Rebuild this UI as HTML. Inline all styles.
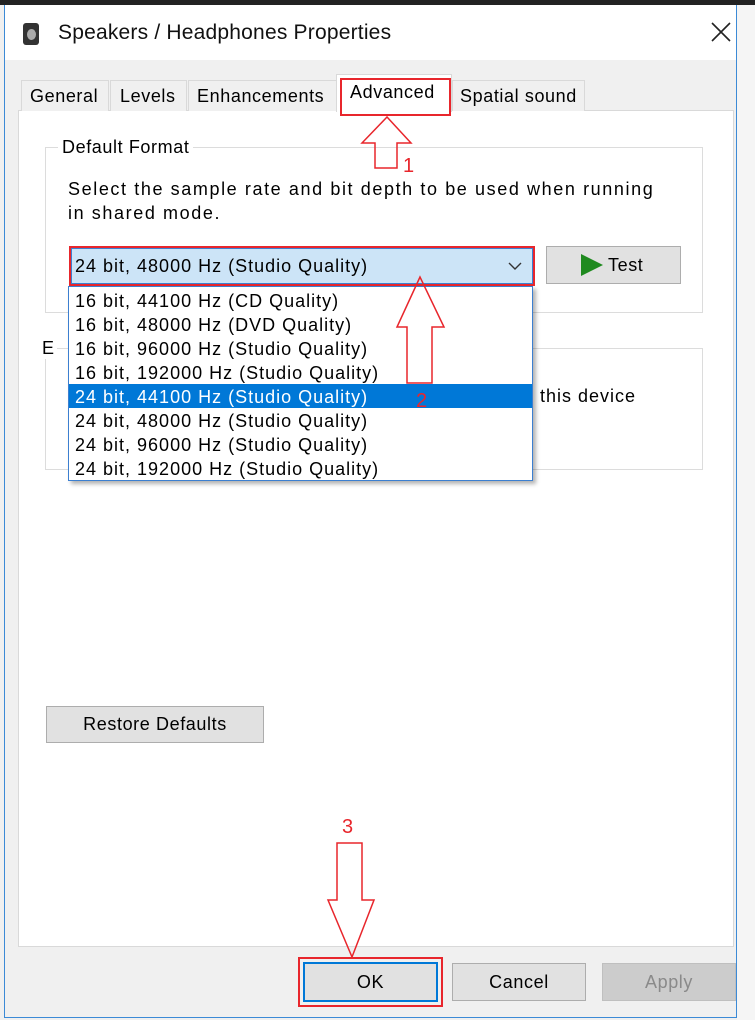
<!DOCTYPE html>
<html><head><meta charset="utf-8"><style>
*{margin:0;padding:0;box-sizing:border-box}
body{width:755px;height:1020px;background:#f0f0f0;position:relative;overflow:hidden;font-family:"Liberation Sans",sans-serif;font-size:18px;letter-spacing:0.6px;color:#000}
.a{position:absolute}
.t{position:absolute;white-space:nowrap}
.btn{position:absolute;background:#e1e1e1;border:1px solid #adadad;text-align:center}
</style></head><body>
<div class="a" style="left:0;top:0;width:755px;height:5px;background:#222"></div>
<div class="a" style="left:737px;top:5px;width:18px;height:1015px;background:#f5f5f5"></div>
<div class="a" style="left:4px;top:5px;width:733px;height:1013px;border:1px solid #3c8ad6;border-top:none;background:#f0f0f0"></div>
<div class="a" style="left:5px;top:5px;width:731px;height:55px;background:#fff"></div>
<div class="a" style="left:23px;top:23px;width:16px;height:22px;background:#333;border-radius:3px"></div>
<div class="a" style="left:27px;top:29px;width:9px;height:11px;background:#aaa;border-radius:50%"></div>
<div class="t" style="left:58px;top:21px;font-size:21px;letter-spacing:0.2px;color:#111">Speakers / Headphones Properties</div>
<svg class="a" style="left:711px;top:22px" width="20" height="20"><path d="M1 1L19 19M19 1L1 19" stroke="#222" stroke-width="1.6"/></svg>

<div class="a" style="left:18px;top:110px;width:716px;height:837px;background:#fff;border:1px solid #d9d9d9"></div>
<div class="a" style="left:21px;top:80px;width:88px;height:31px;border:1px solid #d9d9d9;border-bottom:none;background:#f0f0f0"></div>
<div class="t" style="left:30px;top:86px">General</div>
<div class="a" style="left:110px;top:80px;width:77px;height:31px;border:1px solid #d9d9d9;border-bottom:none;background:#f0f0f0"></div>
<div class="t" style="left:120px;top:86px">Levels</div>
<div class="a" style="left:188px;top:80px;width:150px;height:31px;border:1px solid #d9d9d9;border-bottom:none;background:#f0f0f0"></div>
<div class="t" style="left:197px;top:86px">Enhancements</div>
<div class="a" style="left:336px;top:74px;width:116px;height:38px;background:#fff;border:1px solid #d9d9d9;border-bottom:none"></div>
<div class="a" style="left:340px;top:78px;width:111px;height:38px;border:2px solid #e8262c"></div>
<div class="t" style="left:350px;top:82px">Advanced</div>
<div class="a" style="left:452px;top:80px;width:133px;height:31px;border:1px solid #d9d9d9;border-bottom:none;background:#f0f0f0"></div>
<div class="t" style="left:460px;top:86px">Spatial sound</div>

<div class="a" style="left:45px;top:147px;width:658px;height:166px;border:1px solid #dcdcdc"></div>
<div class="t" style="left:58px;top:137px;background:#fff;padding:0 4px">Default Format</div>
<div class="t" style="left:68px;top:177px;line-height:24px;letter-spacing:1.6px">Select the sample rate and bit depth to be used when running<br>in shared mode.</div>
<div class="a" style="left:69px;top:246px;width:466px;height:40px;background:#cce4f7;border:2px solid #e8262c;box-shadow:inset 0 0 0 1px #3c7fd0"></div>
<div class="t" style="left:75px;top:256px;letter-spacing:1px">24 bit, 48000 Hz (Studio Quality)</div>
<svg class="a" style="left:508px;top:262px" width="14" height="9"><path d="M1 1L7 7L13 1" fill="none" stroke="#333" stroke-width="1.4"/></svg>
<div class="btn" style="left:546px;top:246px;width:135px;height:38px"></div>
<div class="a" style="left:581px;top:254px;width:0;height:0;border-left:22px solid #1f8a1f;border-top:11px solid transparent;border-bottom:11px solid transparent"></div>
<div class="t" style="left:608px;top:255px">Test</div>

<div class="a" style="left:45px;top:348px;width:658px;height:122px;border:1px solid #dcdcdc"></div>
<div class="t" style="left:40px;top:338px;background:#fff;padding:0 2px">E</div>
<div class="t" style="left:540px;top:386px;letter-spacing:1px">this device</div>

<div class="a" style="left:68px;top:286px;width:465px;height:195px;background:#fff;border:1px solid #3c7fd0;box-shadow:3px 3px 4px rgba(0,0,0,.3)"></div>
<div class="a" style="left:69px;top:384px;width:463px;height:24px;background:#0078d7"></div>
<div class="t" style="left:75px;top:289px;line-height:24px;letter-spacing:1px">16 bit, 44100 Hz (CD Quality)<br>16 bit, 48000 Hz (DVD Quality)<br>16 bit, 96000 Hz (Studio Quality)<br>16 bit, 192000 Hz (Studio Quality)<br><span style="color:#fff">24 bit, 44100 Hz (Studio Quality)</span><br>24 bit, 48000 Hz (Studio Quality)<br>24 bit, 96000 Hz (Studio Quality)<br>24 bit, 192000 Hz (Studio Quality)</div>

<div class="btn" style="left:46px;top:706px;width:218px;height:37px;line-height:35px">Restore Defaults</div>

<div class="a" style="left:298px;top:957px;width:145px;height:50px;border:2px solid #e8262c"></div>
<div class="btn" style="left:303px;top:962px;width:135px;height:40px;border:2px solid #0078d7;line-height:36px">OK</div>
<div class="btn" style="left:452px;top:963px;width:134px;height:38px;line-height:36px">Cancel</div>
<div class="btn" style="left:602px;top:963px;width:134px;height:38px;line-height:36px;color:#8a8a8a;background:#ccc;border-color:#bfbfbf">Apply</div>

<svg class="a" style="left:0;top:0" width="755" height="1020">
<g fill="none" stroke="#e8262c" stroke-width="1.5">
<path d="M387 117 L362 143 L375 143 L375 168 L397 168 L397 143 L411 143 Z"/>
<path d="M420 277 L397 327 L407 327 L407 383 L432 383 L432 327 L444 327 Z"/>
<path d="M337 843 L362 843 L362 900 L374 900 L352 957 L328 900 L337 900 Z"/>
</g>
<g fill="#e8262c" font-family="Liberation Sans,sans-serif" font-size="20">
<text x="403" y="172">1</text><text x="416" y="407">2</text><text x="342" y="833">3</text>
</g>
</svg>
</body></html>
